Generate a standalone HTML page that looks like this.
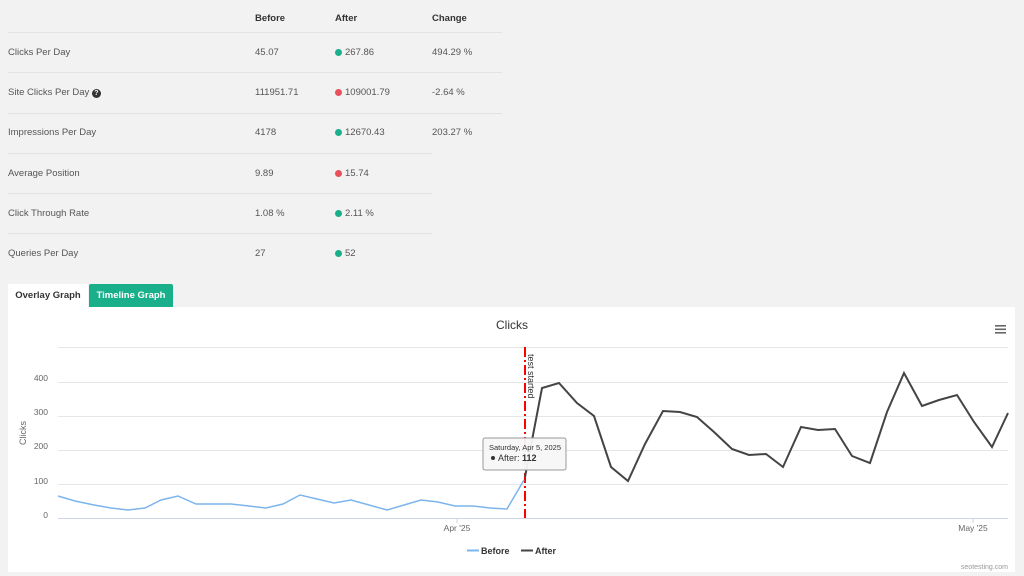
<!DOCTYPE html>
<html><head><meta charset="utf-8"><style>
body{margin:0;width:1024px;height:576px;background:#f2f2f2;font-family:"Liberation Sans",sans-serif;color:#555;font-size:9.5px;position:relative;overflow:hidden}
.a{position:absolute;white-space:nowrap}
.h{font-weight:bold;color:#333}
.ln{position:absolute;height:1px;background:#e2e2e2}
.d{display:inline-block;width:7px;height:7px;border-radius:50%;margin-right:3px;vertical-align:-0.5px}
.g{background:#1aaf8b}.r{background:#e8505b}
</style></head><body>
<div class="a h" style="left:255px;top:13px">Before</div>
<div class="a h" style="left:335px;top:13px">After</div>
<div class="a h" style="left:432px;top:13px">Change</div>
<div class="ln" style="left:8px;top:32px;width:494px"></div>
<div class="a" style="left:8px;top:47px">Clicks Per Day</div><div class="a" style="left:255px;top:47px">45.07</div><div class="a" style="left:335px;top:47px"><span class="d g"></span>267.86</div><div class="a" style="left:432px;top:47px">494.29 %</div>
<div class="ln" style="left:8px;top:72px;width:494px"></div>
<div class="a" style="left:8px;top:87px">Site Clicks Per Day <span style="display:inline-block;width:9px;height:9px;border-radius:50%;background:#333;color:#fff;font-size:7px;text-align:center;line-height:9px;font-weight:bold">?</span></div><div class="a" style="left:255px;top:87px">111951.71</div><div class="a" style="left:335px;top:87px"><span class="d r"></span>109001.79</div><div class="a" style="left:432px;top:87px">-2.64 %</div>
<div class="ln" style="left:8px;top:113px;width:494px"></div>
<div class="a" style="left:8px;top:127px">Impressions Per Day</div><div class="a" style="left:255px;top:127px">4178</div><div class="a" style="left:335px;top:127px"><span class="d g"></span>12670.43</div><div class="a" style="left:432px;top:127px">203.27 %</div>
<div class="ln" style="left:8px;top:153px;width:424px"></div>
<div class="a" style="left:8px;top:168px">Average Position</div><div class="a" style="left:255px;top:168px">9.89</div><div class="a" style="left:335px;top:168px"><span class="d r"></span>15.74</div>
<div class="ln" style="left:8px;top:193px;width:424px"></div>
<div class="a" style="left:8px;top:208px">Click Through Rate</div><div class="a" style="left:255px;top:208px">1.08 %</div><div class="a" style="left:335px;top:208px"><span class="d g"></span>2.11 %</div>
<div class="ln" style="left:8px;top:233px;width:424px"></div>
<div class="a" style="left:8px;top:248px">Queries Per Day</div><div class="a" style="left:255px;top:248px">27</div><div class="a" style="left:335px;top:248px"><span class="d g"></span>52</div>
<div class="a h" style="left:8px;top:284px;width:80px;height:23px;background:#fff;line-height:23px;text-align:center">Overlay Graph</div>
<div class="a h" style="left:89px;top:284px;width:84px;height:23px;background:#1aaf8b;color:#fff;line-height:23px;text-align:center;border-radius:2px 2px 0 0">Timeline Graph</div>
<div class="a" style="left:8px;top:307px;width:1007px;height:265px;background:#fff"></div>
<svg class="a" style="left:0;top:0" width="1024" height="576" font-family="Liberation Sans,sans-serif">
<text x="512" y="329" font-size="12" fill="#333" text-anchor="middle">Clicks</text>
<g fill="#666"><rect x="995" y="325" width="11" height="1.6"/><rect x="995" y="328.5" width="11" height="1.6"/><rect x="995" y="332" width="11" height="1.6"/></g>
<g stroke="#e6e6e6" stroke-width="1"><line x1="58" x2="1008" y1="347.5" y2="347.5"/><line x1="58" x2="1008" y1="382.5" y2="382.5"/><line x1="58" x2="1008" y1="416.5" y2="416.5"/><line x1="58" x2="1008" y1="450.5" y2="450.5"/><line x1="58" x2="1008" y1="484.5" y2="484.5"/></g>
<line x1="58" x2="1008" y1="518.5" y2="518.5" stroke="#ccd6eb"/>
<line x1="457" x2="457" y1="518" y2="523" stroke="#ccd6eb"/><line x1="973" x2="973" y1="518" y2="523" stroke="#ccd6eb"/>
<g font-size="8.5" fill="#666" text-anchor="end"><text x="48" y="381">400</text><text x="48" y="415">300</text><text x="48" y="449">200</text><text x="48" y="484">100</text><text x="48" y="518">0</text></g>
<text x="0" y="0" font-size="9" fill="#666" transform="translate(26,445) rotate(-90)">Clicks</text>
<text x="457" y="531" font-size="8.5" fill="#666" text-anchor="middle">Apr '25</text>
<text x="973" y="531" font-size="8.5" fill="#666" text-anchor="middle">May '25</text>
<line x1="525" x2="525" y1="347" y2="518" stroke="#f00" stroke-width="2" stroke-dasharray="10,3,2,3"/>
<text font-size="9" fill="#333" transform="translate(528,354) rotate(90)">test  started</text>
<polyline fill="none" stroke="#7cb5ec" stroke-width="1.5" points="58,496 75,501 94,505 111,508 128,510 145,508 161,500 178,496 196,504 213,504 231,504 249,506 266,508 283,504 300,495 317,499 334,503 351,500 369,505 387,510 404,505 421,500 438,502 455,506 473,506 490,508 507,509 524,480"/>
<polyline fill="none" stroke="#444" stroke-width="2" points="525,477 542,388 559,383 577,403 594,416 611,467 628,481 645,444 663,411 680,412 697,417 714,432 732,449 749,455 766,454 783,467 801,427 818,430 835,429 852,456 870,463 887,412 904,373 922,406 939,400 957,395 974,422 992,447 1008,413"/>
<rect x="483" y="438" width="83" height="32" rx="2" fill="#f7f7f7" stroke="#999" fill-opacity="0.95"/>
<text x="489" y="450" font-size="7.5" fill="#333">Saturday, Apr 5, 2025</text>
<circle cx="493" cy="458" r="2" fill="#333"/>
<text x="498" y="461" font-size="9" fill="#333">After: <tspan font-weight="bold">112</tspan></text>
<line x1="467" x2="479" y1="550.5" y2="550.5" stroke="#7cb5ec" stroke-width="2"/>
<text x="481" y="554" font-size="9" font-weight="bold" fill="#333">Before</text>
<line x1="521" x2="533" y1="550.5" y2="550.5" stroke="#444" stroke-width="2"/>
<text x="535" y="554" font-size="9" font-weight="bold" fill="#333">After</text>
<text x="1008" y="569" font-size="7" fill="#999" text-anchor="end">seotesting.com</text>
</svg>
</body></html>
